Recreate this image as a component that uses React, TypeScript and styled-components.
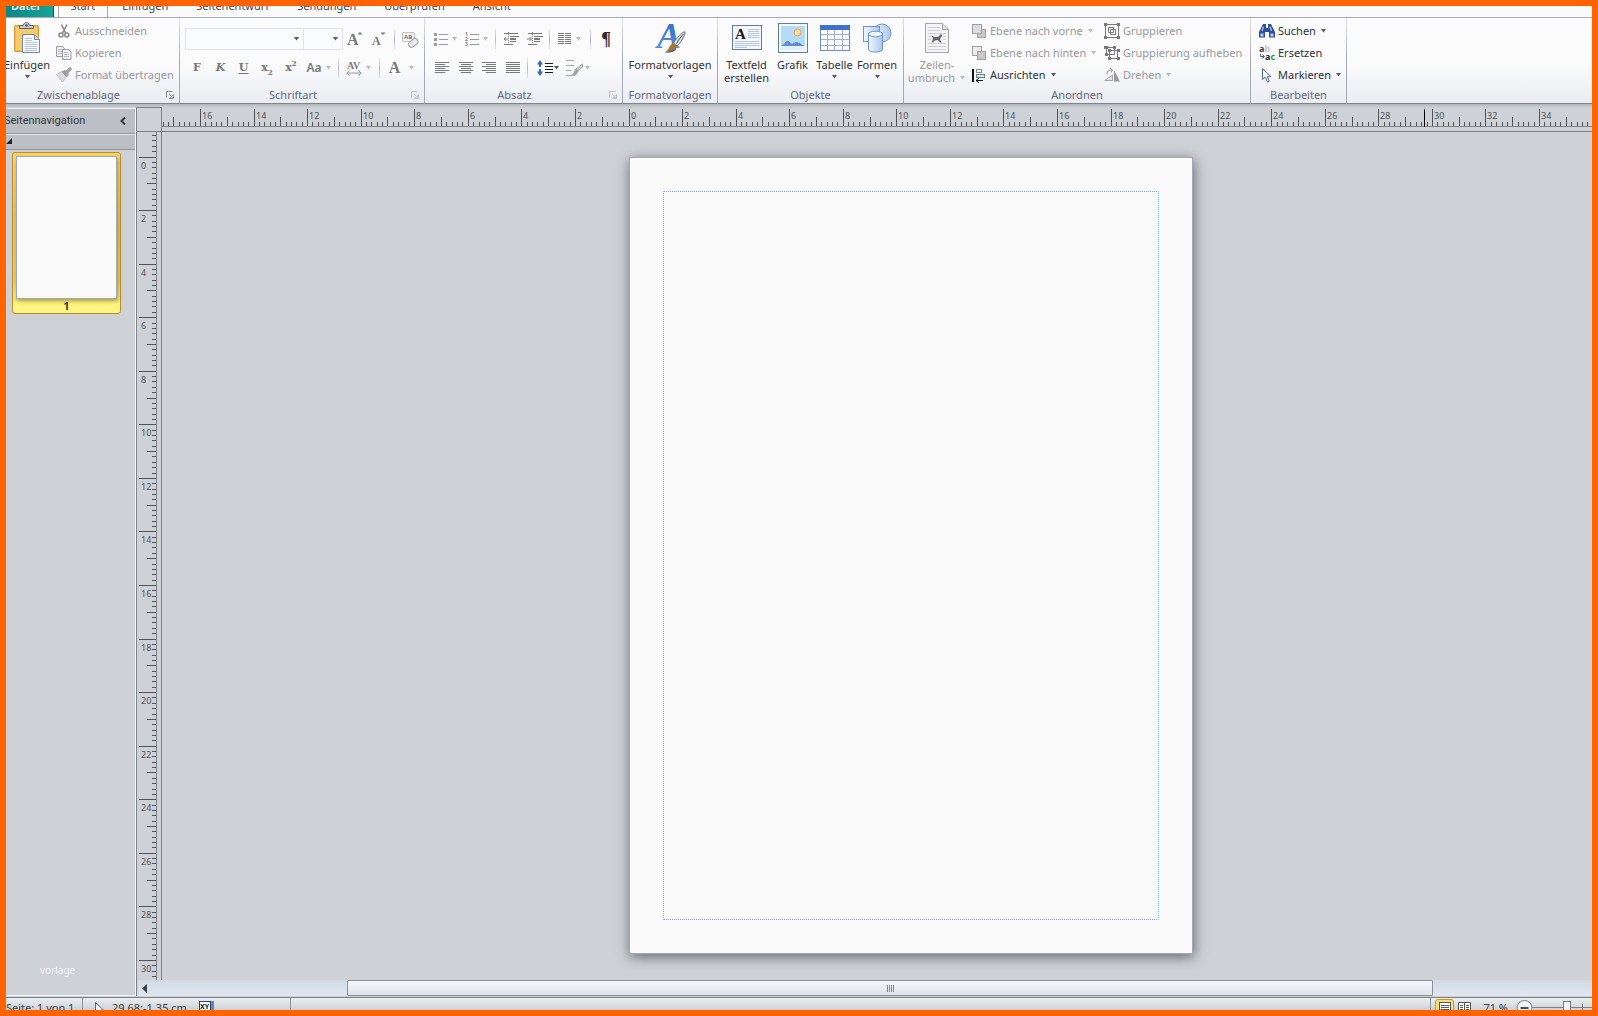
import React from "react";
import styled, { createGlobalStyle, css } from "styled-components";

const ui = `"Noto Sans", "Open Sans", sans-serif`;
const serif = `"Liberation Serif", serif`;
const slab = `"DejaVu Serif", serif`;
const line = "#7d8289";
const surface = "#ced1d6";

const Global = createGlobalStyle`
  *, *::before, *::after { box-sizing: border-box; }
  body { margin: 0; font: 11px/14px ${ui}; color: #2f3338; background: ${surface}; }
  button { font: inherit; color: inherit; background: none; border: 0; padding: 0; margin: 0; }
  svg { display: block; flex: none; }
`;

/* ---------- window ---------- */

const Window = styled.div`
  display: flex;
  flex-direction: column;
  height: 100vh;
  border: 6px solid #ff6300;
  overflow: hidden;
  background: ${surface};
`;

const Tabs = styled.nav`
  display: flex;
  flex: none;
  align-items: flex-end;
  height: 12px;
  overflow: hidden;
  background: #fafafb;
  border-bottom: 1px solid #a7abb3;
  color: #45494f;
`;

const Tab = styled.button<{ $kind?: "file" | "active" }>`
  flex: none;
  height: 24px;
  padding: 6px 14px 4px;
  white-space: nowrap;
  ${(p) =>
    p.$kind === "file" &&
    css`
      padding: 6px 13px 4px 5px;
      margin-right: 4px;
      color: #f2fbfa;
      font-weight: 600;
      background: linear-gradient(90deg, #0b8784, #16a39a);
      border-right: 1px solid #06605e;
    `}
  ${(p) =>
    p.$kind === "active" &&
    css`
      padding: 6px 12px 4px;
      border: 1px solid #a7abb3;
      border-width: 0 1px;
    `}
`;

/* ---------- ribbon ---------- */

const Ribbon = styled.header`
  display: flex;
  flex: none;
  height: 86px;
  background: linear-gradient(#fbfbfc 55%, #e9ecf1);
  border-bottom: 1px solid #80858c;
`;

const GroupBox = styled.section<{ $w: number }>`
  display: flex;
  flex-direction: column;
  flex: none;
  width: ${(p) => p.$w}px;
  padding-top: 2px;
  border-right: 1px solid;
  border-image: linear-gradient(#dfe2e7, #a4a9b2 50%) 1;
`;

const GroupBody = styled.div`
  display: flex;
  flex: 1;
  min-height: 0;
`;

const GroupFooter = styled.div`
  display: flex;
  align-items: center;
  flex: none;
  height: 17px;
  color: #646a7a;
  white-space: nowrap;
`;

const GroupName = styled.h2`
  flex: 1;
  margin: 0;
  font-size: 11px;
  font-weight: 400;
  text-align: center;
`;

const LauncherButton = styled.button<{ $w: number }>`
  display: flex;
  align-items: center;
  justify-content: flex-end;
  flex: none;
  width: ${(p) => p.$w}px;
  height: 14px;
  padding-right: 5px;
`;

const Stack = styled.div<{ $w?: number; $pad?: number }>`
  display: flex;
  flex-direction: column;
  flex: none;
  width: ${(p) => (p.$w ? `${p.$w}px` : "auto")};
  padding-left: ${(p) => p.$pad ?? 0}px;
`;

const SmallButton = styled.button`
  display: flex;
  align-items: center;
  gap: 3px;
  height: 22px;
  white-space: nowrap;
  &:disabled { color: #98999d; }
`;

const BigButton = styled.button<{ $w: number }>`
  display: flex;
  flex-direction: column;
  align-items: center;
  flex: none;
  width: ${(p) => p.$w}px;
  padding-top: 2px;
  line-height: 13px;
  white-space: nowrap;
  &:disabled { color: #98999d; }
`;

const BigIcon = styled.span`
  display: grid;
  place-items: center;
  height: 32px;
  margin-bottom: 4px;
`;

const BigArrow = styled.span`
  display: grid;
  place-items: center;
  height: 11px;
`;

const Inline = styled.span`
  display: flex;
  align-items: center;
  gap: 4px;
`;

const Rows = styled.div`
  display: flex;
  flex-direction: column;
  gap: 1px;
  padding: 5px 0 0 5px;
  color: #77787c;
`;

const ToolRow = styled.div`
  display: flex;
  align-items: center;
  height: 28px;
`;

const Tool = styled.button<{ $w?: number; $gap?: number }>`
  display: flex;
  align-items: center;
  justify-content: center;
  gap: ${(p) => p.$gap ?? 3}px;
  flex: none;
  width: ${(p) => p.$w ?? 23}px;
  height: 22px;
`;

const Bar = styled.i`
  flex: none;
  width: 1px;
  height: 20px;
  margin: 0 3px;
  background: linear-gradient(#e4e6ea, #b3b7be 50%, #e4e6ea);
`;

const Letter = styled.span<{
  $size?: number;
  $face?: string;
  $weight?: number;
  $italic?: boolean;
  $under?: boolean;
  $dark?: boolean;
}>`
  display: flex;
  color: ${(p) => (p.$dark ? "#2b2d31" : "inherit")};
  font-family: ${(p) => p.$face ?? slab};
  font-size: ${(p) => p.$size ?? 11}px;
  font-weight: ${(p) => p.$weight ?? 700};
  font-style: ${(p) => (p.$italic ? "italic" : "normal")};
  text-decoration: ${(p) => (p.$under ? "underline" : "none")};
  text-underline-offset: 2px;
  line-height: 16px;
`;

const Script = styled.small<{ $up?: boolean }>`
  align-self: ${(p) => (p.$up ? "flex-start" : "flex-end")};
  font-size: 7px;
  line-height: 7px;
`;

const Combo = styled.label<{ $w: number }>`
  display: grid;
  align-items: center;
  flex: none;
  width: ${(p) => p.$w}px;
  height: 22px;
  margin-right: ${(p) => (p.$w < 50 ? 0 : -1)}px;
  > * { grid-area: 1 / 1; }
  > svg { justify-self: end; margin-right: 4px; pointer-events: none; }
`;

const Select = styled.select`
  appearance: none;
  width: 100%;
  height: 22px;
  border: 1px solid #e0e3eb;
  border-radius: 0;
  background: #fafbfc;
  font: inherit;
`;

/* ---------- work area ---------- */

const Work = styled.main`
  display: flex;
  flex: 1;
  min-height: 0;
  padding: 3px 0 1px;
  background: linear-gradient(#b2b6bb, ${surface} 4px);
`;

const Side = styled.aside`
  display: flex;
  flex-direction: column;
  flex: none;
  width: 131px;
  border-right: 1px solid ${line};
`;

const SidePanel = styled.div`
  display: flex;
  flex-direction: column;
  flex: 1;
  margin-top: 1px;
  border: 1px solid #f4f5f7;
  border-left: 0;
`;

const SideHead = styled.div`
  display: flex;
  align-items: center;
  justify-content: space-between;
  height: 25px;
  padding-right: 9px;
  background: #bcbfc4;
  border-bottom: 1px solid #93979d;
  color: #33373c;
`;

const SideTitle = styled.h2`
  margin: 0 0 0 -2px;
  font: 400 11px/14px Roboto, sans-serif;
`;

const SideSub = styled.div`
  display: flex;
  align-items: flex-start;
  height: 16px;
  padding-top: 3px;
  background: #bcbfc4;
  border-top: 1px solid #e6e8eb;
  border-bottom: 1px solid #93979d;
`;

const Thumb = styled.button`
  display: flex;
  flex-direction: column;
  align-items: stretch;
  width: 109px;
  margin: 2px 0 0 6px;
  padding: 3px 3px 0;
  border: 1px solid #bf8d2c;
  border-radius: 3px;
  background: linear-gradient(#fbd768, #e8c75d 40%, #ecd062 80%, #fdf682 94%);
  color: #3b3a2c;
  font-weight: 700;
`;

const ThumbPage = styled.span`
  height: 143px;
  background: #fafafb;
  border: 1px solid #a0a9ba;
  box-shadow: 1px 2px 4px rgba(110, 90, 20, 0.55);
`;

const Mark = styled.p`
  margin: auto 0 18px 34px;
  color: #f3f4f6;
  font-size: 10px;
`;

const Editor = styled.div`
  display: grid;
  flex: 1;
  min-width: 0;
  grid-template-columns: 25px 1fr;
  grid-template-rows: 25px 1fr 16px;
`;

const Corner = styled.div`
  border: 1px solid ${line};
  border-left: 0;
`;

const RulerTop = styled.div`
  overflow: hidden;
  border-bottom: 1px solid ${line};
`;

const RulerLeft = styled.div`
  overflow: hidden;
  min-height: 0;
  border-right: 1px solid ${line};
`;

const Canvas = styled.div`
  min-width: 0;
  min-height: 0;
  overflow: hidden;
  padding: 25px 0 0 467px;
`;

const Sheet = styled.article`
  display: flex;
  width: 564px;
  height: 797px;
  padding: 33px;
  background: #fafafb;
  border: 1px solid #a4a8ae;
  box-shadow: 1px 3px 12px rgba(66, 70, 76, 0.75);
`;

const Margins = styled.div`
  flex: 1;
  border: 1px dotted;
  border-color: #82a4f0 #6fc8ea #8f9cf2 #6fb8ea;
`;

const Scroll = styled.div`
  grid-column: 1 / 3;
  display: grid;
  grid-template-columns: 209px minmax(0, 1fr) 159px;
  margin-left: 1px;
  background: linear-gradient(#d2dae5, #dfe6ee);
`;

const ScrollArrow = styled.button`
  display: flex;
  align-items: center;
  padding-left: 4px;
`;

const ScrollThumb = styled.button`
  display: grid;
  place-items: center;
  border: 1px solid #8a8f97;
  border-radius: 1px;
  background: linear-gradient(#f4f6fa, #dfe4eb);
`;

/* ---------- status bar ---------- */

const Status = styled.footer`
  display: flex;
  flex: none;
  align-items: flex-start;
  height: 13px;
  overflow: hidden;
  border-top: 1px solid ${line};
  background: linear-gradient(#eceef1, #cdd1d6 12px);
  color: #3d4045;
`;

const StatusCell = styled.div<{ $w?: number }>`
  display: flex;
  flex: none;
  width: ${(p) => (p.$w ? `${p.$w}px` : "auto")};
  height: 24px;
  padding-top: 3px;
  border-right: 1px solid #8f949b;
  white-space: nowrap;
`;

const Position = styled.button`
  display: flex;
  align-items: flex-start;
  gap: 8px;
  padding-left: 9px;
`;

const PositionIcon = styled.span`
  padding-left: 4px;
`;

const StatusRight = styled.div`
  display: flex;
  align-items: flex-start;
  flex: none;
  margin-left: auto;
  border-left: 1px solid #8f949b;
  height: 24px;
`;

const ViewButton = styled.button<{ $on?: boolean }>`
  display: grid;
  place-items: center;
  width: 19px;
  height: 20px;
  margin-top: 1px;
  margin-left: ${(p) => (p.$on ? 4 : 1)}px;
  border: ${(p) => (p.$on ? "1px solid #c79532" : "0")};
  border-radius: 3px;
  background: ${(p) => (p.$on ? "#fbdf72" : "none")};
`;

const Percent = styled.button`
  margin: 3px 8px 0 9px;
`;

const ZoomTrack = styled.div`
  display: flex;
  width: 76px;
`;

/* ---------- drawings ---------- */

const Caret = ({ color = "#55585d" }: { color?: string }) => (
  <svg width="7" height="4" viewBox="0 0 7 4">
    <path d="M1 0h5L3.500 3.500z" fill={color} />
  </svg>
);
const Pale = () => <Caret color="#b9babd" />;

const Launcher = ({ pale }: { pale?: boolean }) => (
  <svg width="8" height="8" viewBox="0 0 8 8" stroke={pale ? "#bfc1c7" : "#8b8e96"} fill="none">
    <path d="M.5 6.500V.5H6.500M7.500 3.500v4h-4zM3 3l4 4" />
  </svg>
);

const PasteIcon = () => (
  <svg width="28" height="32" viewBox="0 0 28 32">
    <rect x="1.500" y="3.500" width="24" height="26" rx="1.500" fill="#f0bd55" stroke="#d49a38" />
    <rect x="3" y="5" width="21" height="23" fill="#f6cb6c" />
    <path d="M6.500 6.500v-3h4c0-4 6-4 6 0h4v3z" fill="#c8ccd2" stroke="#5b6470" />
    <circle cx="13.500" cy="3.500" r="1.300" fill="#4a525d" />
    <path d="M9.500 12.500h12l5 5v13h-17z" fill="#f6f9fd" stroke="#7186a8" />
    <path d="M21.500 12.500v5h5" fill="#d4dfee" stroke="#7186a8" />
    <path d="M12 16.500h7M12 18.500h7M12 20.500h12M12 22.500h12M12 24.500h12M12 26.500h12M12 28.500h12" stroke="#b4c6e0" />
  </svg>
);

const CutIcon = () => (
  <svg width="16" height="16" viewBox="0 0 16 16" fill="none" stroke="#8c8c90" strokeWidth="1.600">
    <path d="M5.500 1.500 9.500 10M11 1.500 6.500 10" />
    <circle cx="5" cy="12" r="2" />
    <circle cx="10.800" cy="12" r="2" />
  </svg>
);

const CopyIcon = () => (
  <svg width="16" height="16" viewBox="0 0 16 16" fill="#f1f1f2" stroke="#9b9ba0">
    <path d="M.5 1.500h6l2 2v8h-8z" />
    <path d="M2 4.500h5M2 6.500h4M2 8.500h4" stroke="#b9b9bd" />
    <path d="M6.500 4.500h6l2.500 2.500v7.500H6.500z" />
    <path d="M8 7.500h4M8 9.500h5M8 11.500h5" stroke="#b9b9bd" />
  </svg>
);

const BrushIcon = () => (
  <svg width="16" height="16" viewBox="0 0 16 16">
    <path d="M.5 7.500 6 4.500l4.500 5L6.500 15z" fill="#dcdcde" stroke="#bcbcbf" />
    <path d="m5.500 4.500 3.500-1.500 4 4-2.500 3z" fill="#98989c" />
    <path d="m11 5 3-3" stroke="#a3a3a7" strokeWidth="3.500" strokeLinecap="round" />
  </svg>
);

const GrowA = ({ up }: { up?: boolean }) => (
  <svg width="16" height="18" viewBox="0 0 16 18" fill="#77787c">
    <text x={up ? 0 : 1} y="15" fontFamily="Liberation Serif" fontWeight="700" fontSize={up ? 16 : 12}>
      A
    </text>
    <path d={up ? "M10.500 4.500h5L13 2z" : "M9.500 2.500h5L12 5z"} />
  </svg>
);

const ClearIcon = () => (
  <svg width="18" height="18" viewBox="0 0 18 18">
    <rect x="1.500" y="2.500" width="12" height="9" rx="1" fill="#f4f4f5" stroke="#c0c0c4" />
    <text x="3" y="9" fontFamily="Noto Sans" fontWeight="700" fontSize="6" fill="#77787c">
      AB
    </text>
    <rect x="-2.500" y="-5" width="6" height="10" rx="2.500" transform="translate(12 12.500) rotate(52)" fill="#e8e8ea" stroke="#a3a3a7" />
  </svg>
);

const SpacingIcon = () => (
  <svg width="16" height="16" viewBox="0 0 16 16">
    <text x="1" y="9" fontFamily="Liberation Serif" fontWeight="700" fontSize="10" fill="#77787c">
      AV
    </text>
    <path d="M.5 13h15M3.500 10.500 1 13l2.500 2.500M12.500 10.500 15 13l-2.500 2.500" stroke="#9a9a9e" fill="none" />
  </svg>
);

const Bullets = ({ numbers }: { numbers?: boolean }) => (
  <svg width="14" height="14" viewBox="0 0 14 14">
    <path d="M5 2.500h9M5 7.500h9M5 12.500h9" stroke="#9b9b9f" />
    {numbers ? (
      <g fontFamily="Noto Sans" fontSize="5" fontWeight="700" fill="#77787c">
        <text x="0" y="4">1</text>
        <text x="0" y="9">2</text>
        <text x="0" y="14">3</text>
      </g>
    ) : (
      <path d="M0 1h3v3H0zM0 6h3v3H0zM0 11h3v3H0z" fill="#9b9b9f" />
    )}
  </svg>
);

const IndentIcon = ({ right }: { right?: boolean }) => (
  <svg width="16" height="14" viewBox="0 0 16 14" stroke="#77787c" fill="none">
    <path d="M1 1.500h14M7 4.500h9M7 9.500h6M1 12.500h9" />
    <path d="M7 7h6" strokeWidth="2" />
    <path d="M5.500 0v14" strokeDasharray="1 1" />
    <path d={right ? "M0 7h4M2.500 5l2 2-2 2" : "M5 7H1M3 5 1 7l2 2"} />
  </svg>
);

const ColumnsIcon = () => (
  <svg width="14" height="12" viewBox="0 0 14 12" stroke="#77787c">
    <path d="M0 .5h6M0 2.500h6M0 4.500h6M0 6.500h6M0 8.500h6M0 10.500h6M7 .5h6M7 2.500h6M7 4.500h6M7 6.500h6M7 8.500h6M7 10.500h6" />
  </svg>
);

const alignPaths: Record<string, string> = {
  left: "M0 .5h14M0 2.500h10M0 4.500h14M0 6.500h10M0 8.500h14M0 10.500h10",
  center: "M0 .5h14M2 2.500h10M0 4.500h14M2 6.500h10M0 8.500h14M2 10.500h10",
  right: "M0 .5h14M4 2.500h10M0 4.500h14M4 6.500h10M0 8.500h14M4 10.500h10",
  block: "M0 .5h14M0 2.500h14M0 4.500h14M0 6.500h14M0 8.500h14M0 10.500h14",
};
const AlignIcon = ({ kind }: { kind: string }) => (
  <svg width="14" height="12" viewBox="0 0 14 12" stroke="#77787c">
    <path d={alignPaths[kind]} />
  </svg>
);

const LineSpacingIcon = () => (
  <svg width="16" height="16" viewBox="0 0 16 16">
    <path d="M3 0 0 4.500h6zM3 16 0 11.500h6z" fill="#3566c0" />
    <path d="M3 3v4M3 9v4" stroke="#3566c0" strokeWidth="2" />
    <path d="M8 3.500h8M8 6.500h8M8 9.500h8M8 12.500h8" stroke="#1d1d1f" />
  </svg>
);

const RulesIcon = () => (
  <svg width="17" height="16" viewBox="0 0 17 16">
    <path d="M0 .5h8M0 5.500h8M0 10.500h5M0 15.500h9" stroke="#a5a5a9" />
    <path d="M16.500 4v3l-4.500 4-2-2z" fill="#d0d0d2" stroke="#a5a5a9" />
    <path d="M10 8.500 12.500 11.500 10 15H5.500c2.500-1 2-4.500 4.500-6.500z" fill="#a2a2a6" />
  </svg>
);

const StylesIcon = () => (
  <svg width="32" height="32" viewBox="0 0 32 32">
    <defs>
      <linearGradient id="styleA" x1="0" y1="0" x2="0" y2="1">
        <stop offset="0" stopColor="#2f68bd" />
        <stop offset="1" stopColor="#5c97e0" />
      </linearGradient>
    </defs>
    <text x="3" y="26" fontFamily="Liberation Serif" fontStyle="italic" fontWeight="700" fontSize="36" fill="url(#styleA)">
      A
    </text>
    <path d="M31 10c1 2-5 12-8 14l-3.500-3c2-4 9-12 11.500-11z" fill="#dfe3e8" stroke="#6a7078" />
    <path d="M29.500 12c-2 2-5 6-7 9.500" stroke="#3f444b" fill="none" />
    <path d="M19.500 21 23 24.500c-1 5-6 6.500-12.500 6 5-1.500 4-8 9-9.500z" fill="#a9772f" />
    <path d="M11 30.500c6 .5 10-1 11.500-4-3 2-7 3-11.500 4z" fill="#1e5db4" />
  </svg>
);

const TextBoxIcon = () => (
  <svg width="30" height="26" viewBox="0 0 30 26">
    <rect x=".5" y=".5" width="29" height="24" fill="#f5f9fe" stroke="#5d78a3" />
    <path d="M16 4.500h11M16 6.500h11M16 8.500h11M16 10.500h11M16 12.500h11M3 16.500h24M3 18.500h24M3 20.500h24M3 22.500h12" stroke="#b4c8e6" />
    <text x="3" y="14" fontFamily="Liberation Serif" fontWeight="700" fontSize="15" fill="#16181c">
      A
    </text>
  </svg>
);

const PictureIcon = () => (
  <svg width="30" height="30" viewBox="0 0 30 30">
    <rect x=".5" y=".5" width="29" height="29" fill="#f3f8fd" stroke="#5f7f93" />
    <rect x="3" y="3" width="24" height="24" fill="#b4dcf7" />
    <circle cx="19.500" cy="9.500" r="3.500" fill="#fde0a8" stroke="#f3a24c" />
    <path d="M3 23c3-1 4-6 6.500-6s3 3 4.500 4c2-1 2.500-3 4.500-3 3 0 4 4 8.500 5z" fill="#5f8fd0" />
    <path d="M6 20.500c2-4 5-4 6.500-1M16 20c2-2.500 4-2 5.500 0" stroke="#eaf3fc" fill="none" />
    <path d="M3 23h24v4H3z" fill="#e2eff9" />
  </svg>
);

const TableIcon = () => (
  <svg width="30" height="26" viewBox="0 0 30 26">
    <rect x=".5" y=".5" width="29" height="25" fill="#fbfdff" stroke="#6d8cc0" />
    <rect x="0" y="0" width="30" height="5" fill="#3f73c8" />
    <path d="M1 9.500h28M1 14.500h28M1 20.500h28M7.500 5v20M14.500 5v20M22.500 5v20" stroke="#9db3d6" />
  </svg>
);

const ShapesIcon = () => (
  <svg width="30" height="30" viewBox="0 0 30 30">
    <defs>
      <linearGradient id="shape" x1="0" y1="0" x2="1" y2="0">
        <stop offset="0" stopColor="#f3f8fe" />
        <stop offset="1" stopColor="#a9c7ee" />
      </linearGradient>
    </defs>
    <circle cx="20" cy="10" r="9" fill="url(#shape)" stroke="#6f93c8" />
    <rect x="1.500" y="3.500" width="16" height="15" fill="url(#shape)" stroke="#6f93c8" />
    <path d="M6.500 11v15c0 4 14 4 14 0V11z" fill="url(#shape)" stroke="#6f93c8" />
    <ellipse cx="13.500" cy="11" rx="7" ry="2.800" fill="#eef5fd" stroke="#6f93c8" />
  </svg>
);

const WrapIcon = () => (
  <svg width="24" height="30" viewBox="0 0 24 30">
    <path d="M.5.5h17l6 6v23H.5z" fill="#f4f4f5" stroke="#a5a5a9" />
    <path d="M17.500.5v6h6" fill="#e0e0e2" stroke="#a5a5a9" />
    <path d="M3 4.500h12M3 7.500h12M3 10.500h18M3 13.500h3M18 13.500h3M3 16.500h3M18 16.500h3M3 20.500h18M3 23.500h18M3 26.500h18" stroke="#cfcfd2" />
    <path d="M6.500 12l2.500 2h4l3-3 1.500 1.500-1 1L15 16l1.500 3.500H15L13 17l-3 .5L7.500 19.500H6.500L8 16z" fill="#66676b" />
  </svg>
);

const LayerIcon = ({ back }: { back?: boolean }) => {
  const low = <rect x="6.500" y="6.500" width="8" height="8" fill="#c8c8cb" stroke="#a0a0a4" />;
  const top = <rect x="1.500" y="1.500" width="9" height="9" fill={back ? "#ececed" : "#dcdcdf"} stroke="#a0a0a4" />;
  return (
    <svg width="16" height="16" viewBox="0 0 16 16">
      {back ? <>{top}{low}</> : <>{low}{top}</>}
    </svg>
  );
};

const ArrangeIcon = () => (
  <svg width="16" height="16" viewBox="0 0 16 16">
    <path d="M2 2v13" stroke="#111" strokeWidth="2" />
    <rect x="5.500" y="2.500" width="5" height="3" fill="#eef0f3" stroke="#8a8d92" />
    <rect x="5.500" y="7.500" width="8" height="3" fill="#dce8f2" stroke="#5e8596" />
    <path d="M5 13.500h7M8 11l-3 2.500L8 16" stroke="#111" fill="none" />
  </svg>
);

const GroupIcon = ({ apart }: { apart?: boolean }) => (
  <svg width="16" height="16" viewBox="0 0 16 16" fill="none" stroke="#77787c">
    {apart ? (
      <>
        <path d="M2.500 2.500h8v7h-8zM5.500 5.500h8v8h-8z" />
        <path d="M0 1h4v3H0zM9 1h3v3H9zM1 8h3v3H1zM4 4h3v3H4zM13 4h3v3h-3zM4 12h3v3H4zM13 12h3v3h-3z" fill="#77787c" stroke="none" />
      </>
    ) : (
      <>
        <path d="M1.500 1.500h13v13h-13zM4.500 4.500h5v5h-5zM6.500 6.500h5v5h-5z" />
        <path d="M0 0h3v3H0zM13 0h3v3h-3zM0 13h3v3H0zM13 13h3v3h-3z" fill="#77787c" stroke="none" />
      </>
    )}
  </svg>
);

const RotateIcon = () => (
  <svg width="16" height="16" viewBox="0 0 16 16">
    <path d="M.5 13.500 8.500 8v5.500z" fill="#e3e3e5" stroke="#a5a5a9" />
    <path d="M10 14.500V3l6 11.500z" fill="#9a9a9e" />
    <path d="M3 7c0-3 2-4.500 5-4M6 1l2.500 2L7 5.500" stroke="#8a8a8e" fill="none" />
  </svg>
);

const FindIcon = () => (
  <svg width="16" height="16" viewBox="0 0 16 16">
    <path d="M4 1h3v4h2V1h3l1.500 3L16 9v5.500h-6V9H6v5.500H0V9l2.500-5z" fill="#2c4f97" />
    <path d="M4.500 3.500 3 8M11 3.500 12.500 8" stroke="#9db8e8" strokeWidth="1.500" />
    <path d="M1.500 10.500h3v3h-3zM11.500 10.500h3v3h-3z" fill="#b9cdf0" />
  </svg>
);

const ReplaceIcon = () => (
  <svg width="16" height="16" viewBox="0 0 16 16" fontFamily="Noto Sans" fontWeight="700" fontSize="9">
    <text x="0" y="7" fill="#3a3d42">a<tspan fill="#bfc2c8">b</tspan></text>
    <text x="6" y="15" fill="#26282c">a<tspan fill="#1f9a35">c</tspan></text>
    <path d="M1.500 9v2.500H5M3.500 9.500l2 2-2 2" stroke="#3d5f9f" fill="none" />
  </svg>
);

const PointerIcon = ({ width = 16 }: { width?: number }) => (
  <svg width={width} height="16" viewBox={`0 0 ${width} 16`}>
    <path d="M3.500 1.500v11l2.800-2.300L8.500 15l1.800-.8-2-4.500h3.700z" fill="#f6f9fd" stroke="#4f6a92" />
  </svg>
);

/* ---------- rulers ---------- */

const CM = 26.78;

function Ruler({ vertical, zero, from, to, cursor }: {
  vertical?: boolean; zero: number; from: number; to: number; cursor?: number;
}) {
  const ticks: React.ReactNode[] = [];
  for (let k = from; k <= to; k++) {
    const at = zero + Math.floor((k * CM) / 5);
    const start = k % 10 === 0 ? 2 : k % 5 === 0 ? 10 : 15;
    ticks.push(
      vertical
        ? <rect key={k} x={start} y={at} width={19 - start} height="1" />
        : <rect key={k} x={at} y={start} width="1" height={19 - start} />
    );
    if (k % 10 === 0) {
      ticks.push(
        <text key={`t${k}`} x={vertical ? 4 : at + 2} y={12 + (vertical ? at : 0)}>
          {Math.abs(k / 5)}
        </text>
      );
    }
  }
  return (
    <svg width={vertical ? 24 : "100%"} height={vertical ? "100%" : 24} fill="#4f5359" fontSize="9" fontFamily="Noto Sans">
      {ticks}
      {vertical
        ? <rect x="19" width="1" height="100%" fill={line} />
        : <rect y="19" height="1" width="100%" fill={line} />}
      {cursor !== undefined && <rect x={zero + Math.round(cursor * CM)} y="2" width="1" height="18" fill="#000" />}
    </svg>
  );
}

/* ---------- composition ---------- */

function Group({ name, width, launcher, launcherWidth = 18, children }: {
  name: string; width: number; launcher?: "on" | "pale"; launcherWidth?: number; children: React.ReactNode;
}) {
  return (
    <GroupBox $w={width} aria-label={name}>
      <GroupBody>{children}</GroupBody>
      <GroupFooter>
        <GroupName>{name}</GroupName>
        {launcher && (
          <LauncherButton $w={launcherWidth} aria-label={`${name} öffnen`}>
            <Launcher pale={launcher === "pale"} />
          </LauncherButton>
        )}
      </GroupFooter>
    </GroupBox>
  );
}

function Small({ icon, label, menu, disabled }: {
  icon: React.ReactNode; label: string; menu?: boolean; disabled?: boolean;
}) {
  return (
    <SmallButton disabled={disabled}>
      {icon}
      <Inline>{label}{menu && (disabled ? <Pale /> : <Caret />)}</Inline>
    </SmallButton>
  );
}

function Big({ icon, label, width, menu }: {
  icon: React.ReactNode; label: string; width: number; menu?: boolean;
}) {
  return (
    <BigButton $w={width}>
      <BigIcon>{icon}</BigIcon>
      {label}
      {menu && <BigArrow><Caret /></BigArrow>}
    </BigButton>
  );
}

export default function App() {
  return (
    <Window>
      <Global />
      <Tabs>
        <Tab $kind="file">Datei</Tab>
        <Tab $kind="active">Start</Tab>
        <Tab>Einfügen</Tab>
        <Tab>Seitenentwurf</Tab>
        <Tab>Sendungen</Tab>
        <Tab>Überprüfen</Tab>
        <Tab>Ansicht</Tab>
      </Tabs>

      <Ribbon>
        <Group name="Zwischenablage" width={174} launcher="on" launcherWidth={28}>
          <Big width={42} icon={<PasteIcon />} label="Einfügen" menu />
          <Stack $pad={8}>
            <Small disabled icon={<CutIcon />} label="Ausschneiden" />
            <Small disabled icon={<CopyIcon />} label="Kopieren" />
            <Small disabled icon={<BrushIcon />} label="Format übertragen" />
          </Stack>
        </Group>

        <Group name="Schriftart" width={245} launcher="pale">
          <Rows>
            <ToolRow>
              <Combo $w={119}><Select aria-label="Schriftart" /><Caret /></Combo>
              <Combo $w={40}><Select aria-label="Schriftgrad" /><Caret /></Combo>
              <Tool $w={24} aria-label="Schrift vergrößern"><GrowA up /></Tool>
              <Tool $w={24} aria-label="Schrift verkleinern"><GrowA /></Tool>
              <Bar />
              <Tool aria-label="Formatierung löschen"><ClearIcon /></Tool>
            </ToolRow>
            <ToolRow>
              <Tool $w={24}><Letter>F</Letter></Tool>
              <Tool><Letter $italic>K</Letter></Tool>
              <Tool><Letter $under>U</Letter></Tool>
              <Tool $w={24}><Letter>x<Script>2</Script></Letter></Tool>
              <Tool $w={24}><Letter>x<Script $up>2</Script></Letter></Tool>
              <Tool $w={32}><Letter $face={ui} $weight={600} $size={12}>Aa</Letter><Pale /></Tool>
              <Bar />
              <Tool $w={34} aria-label="Zeichenabstand"><SpacingIcon /><Pale /></Tool>
              <Bar />
              <Tool $w={38} $gap={8}><Letter $face={serif} $size={16}>A</Letter><Pale /></Tool>
            </ToolRow>
          </Rows>
        </Group>

        <Group name="Absatz" width={198} launcher="pale">
          <Rows>
            <ToolRow>
              <Tool $w={32} aria-label="Aufzählung"><Bullets /><Pale /></Tool>
              <Tool $w={30} aria-label="Nummerierung"><Bullets numbers /><Pale /></Tool>
              <Bar />
              <Tool $w={24} aria-label="Einzug verkleinern"><IndentIcon /></Tool>
              <Tool aria-label="Einzug vergrößern"><IndentIcon right /></Tool>
              <Bar />
              <Tool $w={34} aria-label="Spalten"><ColumnsIcon /><Pale /></Tool>
              <Bar />
              <Tool $w={24}><Letter $dark $face={serif} $size={18}>¶</Letter></Tool>
            </ToolRow>
            <ToolRow>
              <Tool $w={24} aria-label="Linksbündig"><AlignIcon kind="left" /></Tool>
              <Tool aria-label="Zentriert"><AlignIcon kind="center" /></Tool>
              <Tool $w={24} aria-label="Rechtsbündig"><AlignIcon kind="right" /></Tool>
              <Tool aria-label="Blocksatz"><AlignIcon kind="block" /></Tool>
              <Bar />
              <Tool $w={34} $gap={0} aria-label="Zeilenabstand"><LineSpacingIcon /><Caret /></Tool>
              <Tool $w={27} $gap={1} aria-label="Horizontale Linien"><RulesIcon /><Pale /></Tool>
            </ToolRow>
          </Rows>
        </Group>

        <Group name="Formatvorlagen" width={95}>
          <Big width={94} icon={<StylesIcon />} label="Formatvorlagen" menu />
        </Group>

        <Group name="Objekte" width={186}>
          <Stack $w={4} />
          <BigButton $w={49}>
            <BigIcon><TextBoxIcon /></BigIcon>
            Textfeld<br />erstellen
          </BigButton>
          <Big width={43} icon={<PictureIcon />} label="Grafik" />
          <Big width={41} icon={<TableIcon />} label="Tabelle" menu />
          <Big width={44} icon={<ShapesIcon />} label="Formen" menu />
        </Group>

        <Group name="Anordnen" width={347}>
          <BigButton $w={66} disabled>
            <BigIcon><WrapIcon /></BigIcon>
            Zeilen-
            <Inline>umbruch<Pale /></Inline>
          </BigButton>
          <Stack $w={134} $pad={1}>
            <Small disabled menu icon={<LayerIcon />} label="Ebene nach vorne" />
            <Small disabled menu icon={<LayerIcon back />} label="Ebene nach hinten" />
            <Small menu icon={<ArrangeIcon />} label="Ausrichten" />
          </Stack>
          <Stack>
            <Small disabled icon={<GroupIcon />} label="Gruppieren" />
            <Small disabled icon={<GroupIcon apart />} label="Gruppierung aufheben" />
            <Small disabled menu icon={<RotateIcon />} label="Drehen" />
          </Stack>
        </Group>

        <Group name="Bearbeiten" width={96}>
          <Stack $pad={8}>
            <Small menu icon={<FindIcon />} label="Suchen" />
            <Small icon={<ReplaceIcon />} label="Ersetzen" />
            <Small menu icon={<PointerIcon />} label="Markieren" />
          </Stack>
        </Group>
      </Ribbon>

      <Work>
        <Side>
          <SidePanel>
            <SideHead>
              <SideTitle>Seitennavigation</SideTitle>
              <Tool $w={6} aria-label="Seitennavigation reduzieren">
                <svg width="6" height="8" viewBox="0 0 6 8" fill="none" stroke="#33373c" strokeWidth="2">
                  <path d="M5 .5 1.500 4 5 7.500" />
                </svg>
              </Tool>
            </SideHead>
            <SideSub>
              <svg width="6" height="6" viewBox="0 0 6 6"><path d="M0 6h6V0z" fill="#222" /></svg>
            </SideSub>
            <Thumb>
              <ThumbPage />
              1
            </Thumb>
            <Mark>vorlage</Mark>
          </SidePanel>
        </Side>

        <Editor>
          <Corner />
          <RulerTop><Ruler zero={467} from={-87} to={260} cursor={29.68} /></RulerTop>
          <RulerLeft><Ruler vertical zero={25} from={-4} to={158} /></RulerLeft>
          <Canvas>
            <Sheet><Margins /></Sheet>
          </Canvas>
          <Scroll>
            <ScrollArrow aria-label="Nach links">
              <svg width="5" height="9" viewBox="0 0 5 9"><path d="M5 0v9L0 4.500z" fill="#3a3e44" /></svg>
            </ScrollArrow>
            <ScrollThumb aria-label="Bildlauf">
              <svg width="7" height="7" viewBox="0 0 7 7" stroke="#83878e"><path d="M.5 0v7M2.500 0v7M4.500 0v7M6.500 0v7" /></svg>
            </ScrollThumb>
          </Scroll>
        </Editor>
      </Work>

      <Status>
        <StatusCell $w={77}>Seite: 1 von 1</StatusCell>
        <StatusCell $w={208}>
          <Position>
            <PointerIcon width={12} />
            29,68;-1,35 cm
            <PositionIcon>
              <svg width="16" height="12" viewBox="0 0 16 12">
                <rect x="1" y="0" width="14" height="12" fill="#6d84b4" />
                <rect x=".5" y=".5" width="11" height="9" fill="#fff" stroke="#2d426e" />
                <text x="1" y="8" fontFamily="Noto Sans" fontWeight="700" fontSize="7" fill="#111">XY</text>
              </svg>
            </PositionIcon>
          </Position>
        </StatusCell>
        <StatusRight>
          <ViewButton $on aria-label="Einzelseite">
            <svg width="12" height="14" viewBox="0 0 12 14" stroke="#55585d"><rect x=".5" y=".5" width="11" height="13" fill="#fff" /><path d="M2 3.500h8M2 5.500h8M2 7.500h8M2 9.500h8" /></svg>
          </ViewButton>
          <ViewButton aria-label="Doppelseite">
            <svg width="13" height="14" viewBox="0 0 13 14" stroke="#55585d" fill="#fff"><path d="M.5.5h12v13H.5zM6.500 1v12M2 3.500h3M2 5.500h3M2 7.500h3M8 3.500h3M8 5.500h3M8 7.500h3" /></svg>
          </ViewButton>
          <Percent>71 %</Percent>
          <ZoomTrack>
            <svg width="76" height="20" viewBox="0 0 76 20" stroke="#7b8087">
              <path d="M16 9.500h60M66.500 6v8" />
              <circle cx="8.500" cy="10" r="7.500" fill="#f3f4f6" />
              <path d="M4.500 10h8" stroke="#4a4d52" strokeWidth="2" />
              <rect x="47.500" y="3.500" width="7" height="12" fill="#f3f4f6" />
            </svg>
          </ZoomTrack>
        </StatusRight>
      </Status>
    </Window>
  );
}
